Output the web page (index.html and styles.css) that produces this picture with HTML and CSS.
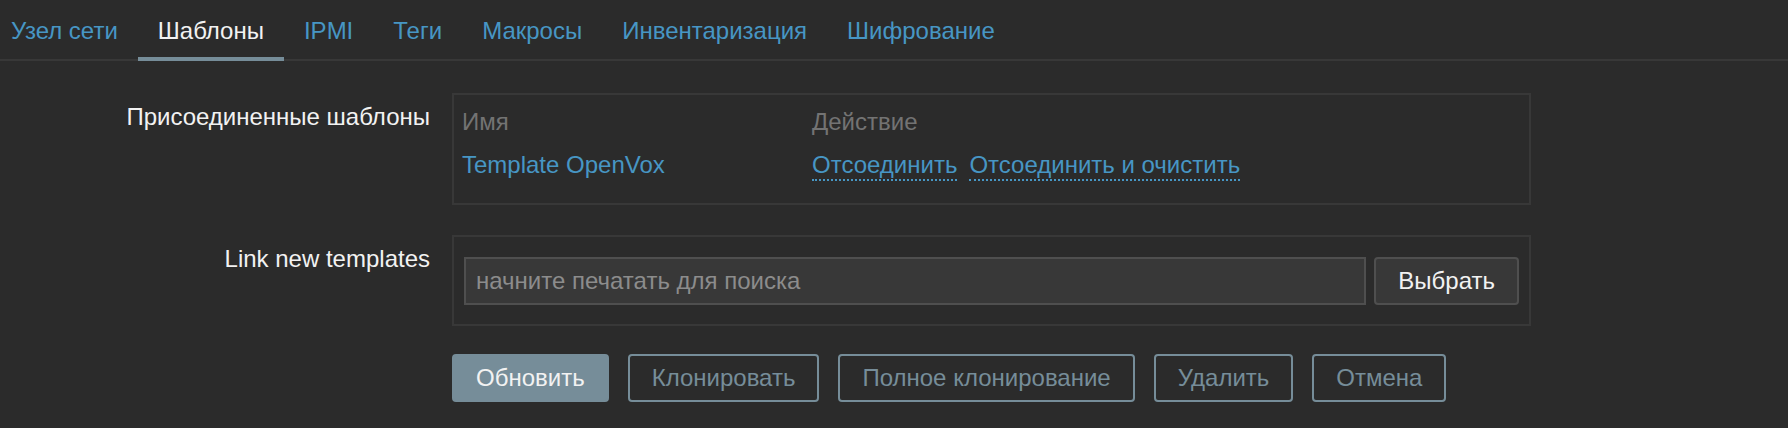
FILE: index.html
```html
<!DOCTYPE html>
<html>
	<head>
		<meta charset="UTF-8">
		<title>Узел сети — Шаблоны</title>
		<link rel="stylesheet" href="styles.css">
	</head>
	<body>
		<ul class="tabs">
			<li><a href="#">Узел сети</a></li>
			<li class="active"><a href="#">Шаблоны</a></li>
			<li><a href="#">IPMI</a></li>
			<li><a href="#">Теги</a></li>
			<li><a href="#">Макросы</a></li>
			<li><a href="#">Инвентаризация</a></li>
			<li><a href="#">Шифрование</a></li>
		</ul>
		<div class="form">
			<div class="row">
				<label class="label">Присоединенные шаблоны</label>
				<div class="box linked">
					<div class="th">Имя</div>
					<div class="th">Действие</div>
					<div class="td"><a class="link" href="#">Template OpenVox</a></div>
					<div class="td actions">
						<a class="link-action" href="#">Отсоединить</a>
						<a class="link-action" href="#">Отсоединить и очистить</a>
					</div>
				</div>
			</div>
			<div class="row">
				<label class="label">Link new templates</label>
				<div class="box multiselect">
					<input type="text" placeholder="начните печатать для поиска">
					<button class="btn-grey">Выбрать</button>
				</div>
			</div>
			<div class="row">
				<div></div>
				<div class="buttons">
					<button class="btn">Обновить</button>
					<button class="btn-alt">Клонировать</button>
					<button class="btn-alt">Полное клонирование</button>
					<button class="btn-alt">Удалить</button>
					<button class="btn-alt">Отмена</button>
				</div>
			</div>
		</div>
	</body>
</html>
```

FILE: styles.css
```css
*{
	padding: 0;
	margin: 0;
	list-style: none;
	box-sizing: border-box;
}
body{
	background: #2b2b2b;
	color: #f2f2f2;
	font-family: "Liberation Sans", Arial, sans-serif;
	font-size: 24px;
}
a{
	text-decoration: none;
	color: #4796c4;
}
.tabs{
	display: flex;
	margin-left: -9px;
	border-bottom: 2px solid #383838;
}
.tabs li{
	margin-bottom: -2px;
}
.tabs li a{
	display: block;
	padding: 4px 20px 0;
	line-height: 53px;
	border-bottom: 4px solid transparent;
}
.tabs li.active a{
	color: #f2f2f2;
	border-bottom-color: #768d99;
}
.form{
	padding-top: 32px;
}
.row{
	display: grid;
	grid-template-columns: 430px 1079px;
	column-gap: 22px;
	margin-bottom: 30px;
}
.label{
	text-align: right;
	padding-top: 10px;
	line-height: 28px;
}
.box{
	border: 2px solid #383838;
}
.linked{
	display: grid;
	grid-template-columns: 350px auto;
	row-gap: 15px;
	padding: 13px 8px 22px;
	line-height: 28px;
}
.th{
	color: #737373;
}
.actions{
	display: flex;
	gap: 12px;
}
.link-action{
	border-bottom: 2px dotted #4796c4;
}
.multiselect{
	display: flex;
	gap: 8px;
	padding: 20px 10px 19px;
}
.multiselect input{
	flex: 1;
	height: 48px;
	padding: 0 10px;
	background: #383838;
	border: 2px solid #4f4f4f;
	color: #f2f2f2;
	font: inherit;
	outline: none;
}
.multiselect input::placeholder{
	color: #8c8c8c;
}
button{
	height: 48px;
	padding: 0 22px;
	border: 2px solid #768d99;
	border-radius: 4px;
	font: inherit;
	cursor: pointer;
	white-space: nowrap;
}
.btn-grey{
	background: #383838;
	border-color: #4f4f4f;
	color: #f2f2f2;
}
.buttons{
	display: flex;
	gap: 19px;
	margin-top: -2px;
}
.btn{
	background: #768d99;
	color: #f2f2f2;
}
.btn-alt{
	background: transparent;
	color: #768d99;
}
```
